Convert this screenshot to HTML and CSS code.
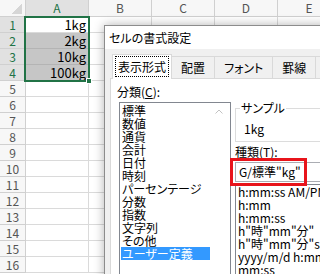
FILE: index.html
```html
<!DOCTYPE html>
<html lang="ja">
<head>
    <meta charset="UTF-8">
    <title>セルの書式設定</title>
    <link rel="stylesheet" href="styles.css">
</head>
<body>
    <div class="sheet">
        <div class="hd corner"></div>
        <div class="hd col sel">A</div>
        <div class="hd col">B</div>
        <div class="hd col">C</div>
        <div class="hd col">D</div>
        <div class="hd col">E</div>

        <div class="hd row sel">1</div>
        <div class="cell num">1kg</div><div class="cell"></div><div class="cell"></div><div class="cell"></div><div class="cell"></div>
        <div class="hd row sel">2</div>
        <div class="cell num picked">2kg</div><div class="cell"></div><div class="cell"></div><div class="cell"></div><div class="cell"></div>
        <div class="hd row sel">3</div>
        <div class="cell num picked">10kg</div><div class="cell"></div><div class="cell"></div><div class="cell"></div><div class="cell"></div>
        <div class="hd row sel">4</div>
        <div class="cell num picked">100kg</div><div class="cell"></div><div class="cell"></div><div class="cell"></div><div class="cell"></div>
        <div class="hd row">5</div>
        <div class="cell"></div><div class="cell"></div><div class="cell"></div><div class="cell"></div><div class="cell"></div>
        <div class="hd row">6</div>
        <div class="cell"></div><div class="cell"></div><div class="cell"></div><div class="cell"></div><div class="cell"></div>
        <div class="hd row">7</div>
        <div class="cell"></div><div class="cell"></div><div class="cell"></div><div class="cell"></div><div class="cell"></div>
        <div class="hd row">8</div>
        <div class="cell"></div><div class="cell"></div><div class="cell"></div><div class="cell"></div><div class="cell"></div>
        <div class="hd row">9</div>
        <div class="cell"></div><div class="cell"></div><div class="cell"></div><div class="cell"></div><div class="cell"></div>
        <div class="hd row">10</div>
        <div class="cell"></div><div class="cell"></div><div class="cell"></div><div class="cell"></div><div class="cell"></div>
        <div class="hd row">11</div>
        <div class="cell"></div><div class="cell"></div><div class="cell"></div><div class="cell"></div><div class="cell"></div>
        <div class="hd row">12</div>
        <div class="cell"></div><div class="cell"></div><div class="cell"></div><div class="cell"></div><div class="cell"></div>
        <div class="hd row">13</div>
        <div class="cell"></div><div class="cell"></div><div class="cell"></div><div class="cell"></div><div class="cell"></div>
        <div class="hd row">14</div>
        <div class="cell"></div><div class="cell"></div><div class="cell"></div><div class="cell"></div><div class="cell"></div>
        <div class="hd row">15</div>
        <div class="cell"></div><div class="cell"></div><div class="cell"></div><div class="cell"></div><div class="cell"></div>
        <div class="hd row">16</div>
        <div class="cell"></div><div class="cell"></div><div class="cell"></div><div class="cell"></div><div class="cell"></div>
    </div>

    <!-- range A1:A4 -->
    <div class="selection"><span class="handle"></span></div>

    <div class="dialog">
        <div class="title">セルの書式設定</div>
        <div class="tabs">
            <div class="tab on"><span>表示形式</span></div>
            <div class="tab">配置</div>
            <div class="tab">フォント</div>
            <div class="tab">罫線</div>
            <div class="tab">塗りつぶし</div>
        </div>
        <div class="page">
            <div class="cat">
                <div class="lbl">分類(<u>C</u>):</div>
                <div class="catlist">
                    <ul>
                        <li>標準</li>
                        <li>数値</li>
                        <li>通貨</li>
                        <li>会計</li>
                        <li>日付</li>
                        <li>時刻</li>
                        <li>パーセンテージ</li>
                        <li>分数</li>
                        <li>指数</li>
                        <li>文字列</li>
                        <li>その他</li>
                        <li class="on">ユーザー定義</li>
                    </ul>
                    <div class="vscroll">
                        <svg width="8" height="5" viewBox="0 0 8 5"><polyline points="0.5,4.5 4,1 7.5,4.5" fill="none" stroke="#c2c2c2" stroke-width="1"/></svg>
                    </div>
                </div>
            </div>
            <div class="fmt">
                <fieldset class="sample">
                    <legend>サンプル</legend>
                    <div>1kg</div>
                </fieldset>
                <div class="lbl type-lbl">種類(<u>T</u>):</div>
                <div class="typebox">G/標準"kg"<span class="mark"></span></div>
                <ul class="fmtlist">
                    <li>h:mm:ss AM/PM</li>
                    <li>h:mm</li>
                    <li>h:mm:ss</li>
                    <li>h"時"mm"分"</li>
                    <li>h"時"mm"分"ss"秒"</li>
                    <li>yyyy/m/d h:mm</li>
                    <li>mm:ss</li>
                </ul>
            </div>
        </div>
    </div>
</body>
</html>
```

FILE: styles.css
```css
* {
    margin: 0;
    padding: 0;
    box-sizing: border-box;
}

body {
    font-family: "Noto Sans CJK JP", sans-serif;
    background: #fff;
    color: #000;
    width: 320px;
    height: 274px;
    overflow: hidden;
    position: relative;
}

/* spreadsheet */
.sheet {
    display: grid;
    grid-template-columns: 26px repeat(5, 63px);
    grid-template-rows: 17px;
    grid-auto-rows: 16px;
}

.sheet > div {
    border-right: 1px solid #dadada;
    border-bottom: 1px solid #dadada;
}

.hd {
    background: #f7f7f7;
    color: #555;
    font-size: 12px;
    line-height: 15px;
    text-align: center;
}

.sheet > .hd {
    border-color: #d0d0d0;
}

.corner {
    background: linear-gradient(135deg, transparent 50%, #d6d6d6 50%) right 3px bottom 2px / 10px 10px no-repeat, #f7f7f7;
}

.hd.sel {
    background: #e1e1e1;
    color: #217346;
}

.cell.num {
    text-align: right;
    padding-right: 2px;
    font-size: 13px;
    line-height: 15px;
}

.sheet > .cell.picked {
    background: #c6c6c6;
    border-bottom-color: #b4b4b4;
}

.selection {
    position: absolute;
    left: 24px;
    top: 16px;
    width: 66px;
    height: 66px;
    border: 2px solid #217346;
}

.handle {
    position: absolute;
    right: -4px;
    bottom: -4px;
    width: 6px;
    height: 6px;
    background: #217346;
    border: 1px solid #fff;
}

/* format cells dialog */
.dialog {
    position: absolute;
    left: 104px;
    top: 25px;
    width: 400px;
    height: 300px;
    background: #f0f0f0;
    border: 1px solid #8c8c8c;
    box-shadow: 0 0 10px rgba(0, 0, 0, 0.3);
    font-size: 12px;
    font-feature-settings: "palt";
}

.title {
    height: 23px;
    line-height: 23px;
    padding-left: 4px;
    background: #fff;
}

.tabs {
    display: flex;
    align-items: flex-end;
    padding: 5px 0 0 7px;
}

.tab {
    height: 22px;
    line-height: 21px;
    padding: 0 9px;
    margin-left: -1px;
    border: 1px solid #d9d9d9;
    border-bottom: none;
    background: #f0f0f0;
    white-space: nowrap;
}

.tab.on {
    position: relative;
    height: 25px;
    padding: 1px 2px 2px;
    margin: 0 0 -1px;
    background: #fff;
}

.tab.on span {
    display: block;
    border: 1px dotted #000;
    padding: 0 2px;
    line-height: 19px;
}

.page {
    display: flex;
    height: 220px;
    margin-left: 5px;
    background: #fff;
    border: 1px solid #d9d9d9;
}

.cat {
    padding: 6px 0 0 6px;
}

.lbl {
    line-height: 14px;
}

.catlist {
    display: flex;
    width: 112px;
    height: 200px;
    margin: 3px 0 0 2px;
    border: 1px solid #828790;
}

.catlist ul {
    flex: 1;
    list-style: none;
    padding: 1px 1px 0;
}

.catlist li {
    line-height: 13px;
    padding-left: 1px;
    white-space: nowrap;
}

.catlist li.on {
    background: #3399ff;
    color: #fff;
}

.vscroll {
    width: 19px;
    padding: 6px 0 0 4px;
}

.vscroll svg {
    display: block;
}

.fmt {
    flex: 1;
    padding-left: 4px;
}

.sample {
    margin-top: 22px;
    padding: 7px 8px 5px;
    border: 1px solid #dcdcdc;
    line-height: 14px;
}

.sample legend {
    margin-left: -4px;
    padding: 0 1px;
}

.type-lbl {
    margin-top: 3px;
}

.typebox {
    position: relative;
    height: 20px;
    margin-top: 3px;
    padding-left: 3px;
    line-height: 18px;
    border: 1px solid #abadb3;
    white-space: nowrap;
}

.mark {
    position: absolute;
    left: -6px;
    top: -5px;
    width: 77px;
    height: 28px;
    border: 3px solid #e8141b;
}

.fmtlist {
    height: 100px;
    margin-top: 2px;
    padding: 0 2px;
    list-style: none;
    line-height: 13px;
    border: 1px solid #828790;
    white-space: nowrap;
}
```
